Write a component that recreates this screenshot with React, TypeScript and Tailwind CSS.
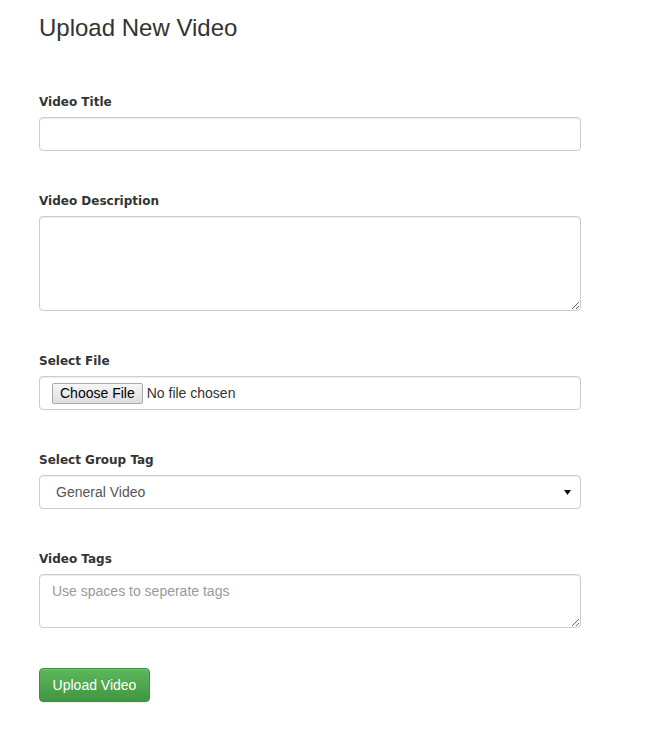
const label = "block mb-[6px] text-[12px] leading-[17px] font-bold text-[#333] [font-family:'DejaVu_Sans',sans-serif]";
const control =
  "block w-[542px] rounded-[4px] border border-[#ccc] bg-white shadow-[inset_0_1px_1px_rgba(0,0,0,0.075)] text-[14px] text-[#555] [font-family:'Liberation_Sans',Arial,sans-serif]";

export default function App() {
  return (
    <div className="min-h-[745px] bg-white pl-[39px] pt-[15px] [font-family:'Liberation_Sans',Arial,sans-serif]">
      <h1 className="text-[24px] leading-[26px] text-[#333]">Upload New Video</h1>

      <form className="mt-[53px] flex flex-col gap-[42px]">
        <div>
          <label className={label}>Video Title</label>
          <input type="text" className={`${control} h-[34px] px-3`} />
        </div>

        <div>
          <label className={label}>Video Description</label>
          <textarea className={`${control} h-[95px] px-3 py-[6px]`} />
        </div>

        <div>
          <label className={label}>Select File</label>
          <div className={`${control} flex h-[34px] items-center px-3`}>
            <span className="flex h-[21px] items-center rounded-[2px] border border-[#a9a9a9] bg-gradient-to-b from-[#f6f6f6] to-[#dedede] px-[7px] text-[14px] text-black">
              Choose File
            </span>
            <span className="ml-[4px] text-[14px] text-[#333]">No file chosen</span>
          </div>
        </div>

        <div>
          <label className={label}>Select Group Tag</label>
          <div className={`${control} flex h-[34px] items-center justify-between pl-4 pr-[9px]`}>
            <span>General Video</span>
            <svg width="7" height="5" viewBox="0 0 7 5">
              <path d="M0 0h7L3.5 5z" fill="#111" />
            </svg>
          </div>
        </div>

        <div>
          <label className={label}>Video Tags</label>
          <textarea
            placeholder="Use spaces to seperate tags"
            className={`${control} h-[54px] px-3 py-[6px] placeholder:text-[#999]`}
          />
        </div>
      </form>

      <button
        type="button"
        className="mt-[40px] h-[34px] w-[111px] rounded-[4px] border border-[#3e8f3e] bg-gradient-to-b from-[#5cb85c] to-[#419641] text-[14px] text-white shadow-[inset_0_1px_0_rgba(255,255,255,0.15),0_1px_1px_rgba(0,0,0,0.075)]"
      >
        Upload Video
      </button>
    </div>
  );
}
